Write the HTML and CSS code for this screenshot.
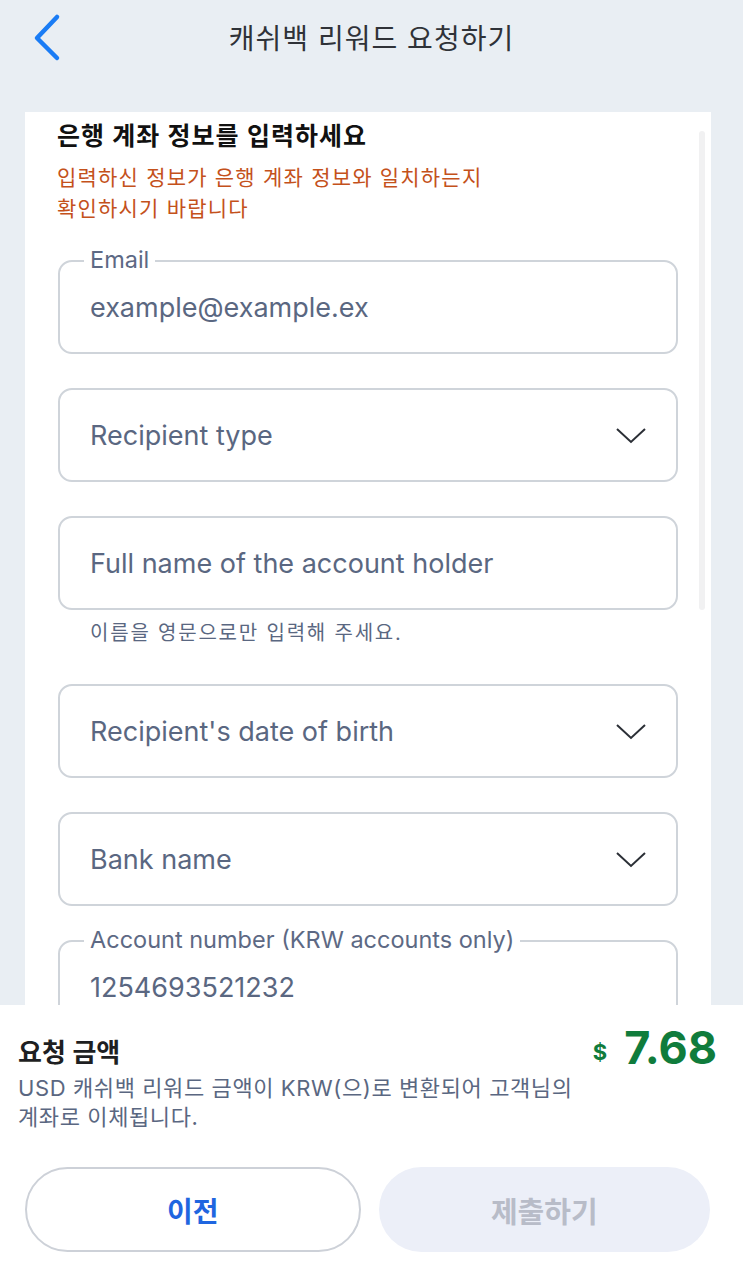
FILE: index.html
```html
<!DOCTYPE html>
<html lang="ko">
<head>
    <meta charset="UTF-8">
    <meta name="viewport" content="width=device-width, initial-scale=1.0">
    <title>캐쉬백 리워드 요청하기</title>
    <link rel="stylesheet" href="styles.css">
</head>
<body>
    <div class="screen">
        <header class="top-bar">
            <a href="#" class="back-btn" aria-label="뒤로">
                <svg width="32" height="50" viewBox="0 0 32 50">
                    <path d="M27 5 L7 26 L27 46" fill="none" stroke="#1a7cf5" stroke-width="4.5" stroke-linecap="round" stroke-linejoin="round"/>
                </svg>
            </a>
            <h1 class="page-title">캐쉬백 리워드 요청하기</h1>
        </header>

        <main class="content">
            <div class="card">
                <div class="scroll-track"></div>
                <h2 class="card-title">은행 계좌 정보를 입력하세요</h2>
                <p class="notice">입력하신 정보가 은행 계좌 정보와 일치하는지<br>확인하시기 바랍니다</p>

                <div class="form">
                    <div class="field">
                        <span class="field-label">Email</span>
                        <span class="field-value">example@example.ex</span>
                    </div>

                    <div class="field">
                        <span class="field-value">Recipient type</span>
                        <svg class="caret" width="32" height="20" viewBox="0 0 32 20">
                            <path d="M2 4 L16 17 L30 4" fill="none" stroke="#2b2f36" stroke-width="2"/>
                        </svg>
                    </div>

                    <div class="field-group">
                        <div class="field">
                            <span class="field-value">Full name of the account holder</span>
                        </div>
                        <p class="helper">이름을 영문으로만 입력해 주세요.</p>
                    </div>

                    <div class="field">
                        <span class="field-value">Recipient's date of birth</span>
                        <svg class="caret" width="32" height="20" viewBox="0 0 32 20">
                            <path d="M2 4 L16 17 L30 4" fill="none" stroke="#2b2f36" stroke-width="2"/>
                        </svg>
                    </div>

                    <div class="field">
                        <span class="field-value">Bank name</span>
                        <svg class="caret" width="32" height="20" viewBox="0 0 32 20">
                            <path d="M2 4 L16 17 L30 4" fill="none" stroke="#2b2f36" stroke-width="2"/>
                        </svg>
                    </div>

                    <div class="field">
                        <span class="field-label">Account number (KRW accounts only)</span>
                        <span class="field-value">1254693521232</span>
                    </div>
                </div>
            </div>
        </main>

        <footer class="summary">
            <div class="summary-row">
                <span class="summary-title">요청 금액</span>
                <span class="amount"><span class="currency">$</span>7.68</span>
            </div>
            <p class="summary-desc">USD 캐쉬백 리워드 금액이 KRW(으)로 변환되어 고객님의<br>계좌로 이체됩니다.</p>
            <div class="actions">
                <a href="#" class="btn btn-prev">이전</a>
                <a href="#" class="btn btn-submit">제출하기</a>
            </div>
        </footer>
    </div>
</body>
</html>
```

FILE: styles.css
```css
html, body {
    margin: 0;
    padding: 0;
}

body {
    font-family: Inter, "Noto Sans CJK KR", sans-serif;
    background-color: #e9eef3;
}

.screen {
    height: 1283px;
    display: flex;
    flex-direction: column;
    overflow: hidden;
}

/* header */
.top-bar {
    height: 74px;
    display: grid;
    grid-template-columns: 1fr auto 1fr;
    align-items: center;
    margin-bottom: 38px;
}

.back-btn {
    display: flex;
    padding-left: 30px;
}

.page-title {
    margin: 0;
    font-size: 28px;
    font-weight: 400;
    letter-spacing: 1px;
    color: #2f3238;
}

/* card */
.content {
    flex: 1;
    overflow: hidden;
}

.card {
    position: relative;
    background-color: #ffffff;
    margin: 0 32px 0 25px;
    padding: 9px 0 0;
    min-height: 100%;
    box-sizing: border-box;
}

.scroll-track {
    position: absolute;
    top: 19px;
    right: 6px;
    width: 6px;
    height: 479px;
    border-radius: 3px;
    background-color: #f1f1f2;
}

.card-title {
    margin: 0 0 0 32px;
    font-size: 25px;
    line-height: 30px;
    font-weight: 600;
    letter-spacing: 1px;
    color: #111111;
}

.notice {
    margin: 11px 0 0 32px;
    font-size: 21px;
    line-height: 31px;
    letter-spacing: 1.2px;
    color: #c4511b;
}

.form {
    display: flex;
    flex-direction: column;
    gap: 34px;
    padding: 36px 33px 0;
}

.field {
    position: relative;
    height: 94px;
    box-sizing: border-box;
    border: 2px solid #cfd4da;
    border-radius: 14px;
    display: flex;
    align-items: center;
    justify-content: space-between;
    padding: 0 30px;
}

.field-label {
    position: absolute;
    top: -16px;
    left: 24px;
    padding: 0 6px;
    background-color: #ffffff;
    font-size: 23.5px;
    line-height: 28px;
    color: #5d6984;
}

.field-value {
    font-size: 27px;
    color: #5a6781;
}

.caret {
    margin-right: -1px;
}

.helper {
    margin: 9px 0 3px 32px;
    font-size: 20px;
    line-height: 28px;
    letter-spacing: 1.8px;
    color: #5a6781;
}

/* footer */
.summary {
    background-color: #ffffff;
    padding-top: 23px;
}

.summary-row {
    display: flex;
    align-items: center;
    justify-content: space-between;
    height: 44px;
    padding: 0 26px 0 18px;
}

.summary-title {
    font-size: 26px;
    font-weight: 600;
    color: #1e1f22;
}

.amount {
    font-size: 45px;
    line-height: 44px;
    font-weight: 700;
    color: #107c3c;
}

.currency {
    font-size: 22px;
    margin-right: 17px;
    vertical-align: 4px;
}

.summary-desc {
    margin: 2px 0 0 18px;
    font-size: 22px;
    line-height: 29px;
    letter-spacing: 0.6px;
    color: #5a6781;
}

.actions {
    display: flex;
    gap: 18px;
    padding: 35px 33px 31px 25px;
}

.btn {
    flex: 1;
    height: 85px;
    box-sizing: border-box;
    border-radius: 43px;
    display: flex;
    align-items: center;
    justify-content: center;
    font-size: 28px;
    font-weight: 700;
    text-decoration: none;
}

.btn-prev {
    border: 2px solid #cdd1d8;
    color: #1f66e0;
    background-color: #ffffff;
}

.btn-submit {
    background-color: #eceff8;
    color: #b8bcc8;
    font-size: 29px;
}
```
